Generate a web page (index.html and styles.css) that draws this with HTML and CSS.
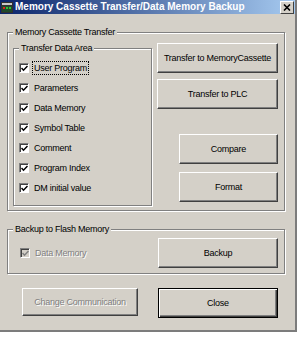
FILE: index.html
```html
<!DOCTYPE html>
<html lang="en">
<head>
  <meta charset="UTF-8">
  <meta name="viewport" content="width=device-width, initial-scale=1.0">
  <title>Memory Cassette Transfer/Data Memory Backup</title>
  <link rel="stylesheet" href="styles.css">
</head>
<body>
  <div class="window">
    <div class="titlebar">
      <svg class="app-icon" width="12" height="11" viewBox="0 0 12 11">
        <rect x="0" y="0" width="12" height="11" fill="#303030"/>
        <rect x="1" y="1" width="10" height="2" fill="#c8c8c8"/>
        <rect x="1" y="4" width="10" height="6" fill="#1f4a2a"/>
        <rect x="2" y="5" width="2" height="2" fill="#e02020"/>
        <rect x="5" y="5" width="2" height="2" fill="#30c030"/>
        <rect x="8" y="5" width="2" height="2" fill="#30c030"/>
      </svg>
      <span class="title">Memory Cassette Transfer/Data Memory Backup</span>
      <span class="close-box">
        <svg width="8" height="7" viewBox="0 0 8 7">
          <path d="M1 0.5 L7 6.5 M7 0.5 L1 6.5" stroke="#000" stroke-width="1.6"/>
        </svg>
      </span>
    </div>

    <div class="content">
      <fieldset class="group group-transfer">
        <legend>Memory Cassette Transfer</legend>
        <div class="transfer-grid">
          <fieldset class="group group-area">
            <legend>Transfer Data Area</legend>
            <label class="check">
              <span class="box"><svg width="7" height="7" viewBox="0 0 7 7"><path d="M0.5 3 L2.5 5.2 L6.5 1" stroke="#000" stroke-width="1.5" fill="none"/></svg></span>
              <span class="text focused">User Program</span>
            </label>
            <label class="check">
              <span class="box"><svg width="7" height="7" viewBox="0 0 7 7"><path d="M0.5 3 L2.5 5.2 L6.5 1" stroke="#000" stroke-width="1.5" fill="none"/></svg></span>
              <span class="text">Parameters</span>
            </label>
            <label class="check">
              <span class="box"><svg width="7" height="7" viewBox="0 0 7 7"><path d="M0.5 3 L2.5 5.2 L6.5 1" stroke="#000" stroke-width="1.5" fill="none"/></svg></span>
              <span class="text">Data Memory</span>
            </label>
            <label class="check">
              <span class="box"><svg width="7" height="7" viewBox="0 0 7 7"><path d="M0.5 3 L2.5 5.2 L6.5 1" stroke="#000" stroke-width="1.5" fill="none"/></svg></span>
              <span class="text">Symbol Table</span>
            </label>
            <label class="check">
              <span class="box"><svg width="7" height="7" viewBox="0 0 7 7"><path d="M0.5 3 L2.5 5.2 L6.5 1" stroke="#000" stroke-width="1.5" fill="none"/></svg></span>
              <span class="text">Comment</span>
            </label>
            <label class="check">
              <span class="box"><svg width="7" height="7" viewBox="0 0 7 7"><path d="M0.5 3 L2.5 5.2 L6.5 1" stroke="#000" stroke-width="1.5" fill="none"/></svg></span>
              <span class="text">Program Index</span>
            </label>
            <label class="check">
              <span class="box"><svg width="7" height="7" viewBox="0 0 7 7"><path d="M0.5 3 L2.5 5.2 L6.5 1" stroke="#000" stroke-width="1.5" fill="none"/></svg></span>
              <span class="text">DM initial value</span>
            </label>
          </fieldset>

          <div class="transfer-buttons">
            <button class="btn">Transfer to MemoryCassette</button>
            <button class="btn btn-plc">Transfer to PLC</button>
            <button class="btn btn-short btn-compare">Compare</button>
            <button class="btn btn-short btn-format">Format</button>
          </div>
        </div>
      </fieldset>

      <fieldset class="group group-backup">
        <legend>Backup to Flash Memory</legend>
        <div class="backup-row">
          <label class="check disabled">
            <span class="box"><svg width="7" height="7" viewBox="0 0 7 7"><path d="M0.5 3 L2.5 5.2 L6.5 1" stroke="#808080" stroke-width="1.5" fill="none"/></svg></span>
            <span class="text">Data Memory</span>
          </label>
          <button class="btn btn-backup">Backup</button>
        </div>
      </fieldset>

      <div class="actions">
        <button class="btn btn-change" disabled>Change Communication</button>
        <button class="btn btn-default">Close</button>
      </div>
    </div>
  </div>
</body>
</html>
```

FILE: styles.css
```css
body {
  margin: 0;
  padding: 0;
  background-color: #fff;
  font-family: "Liberation Sans", Arial, sans-serif;
  font-size: 9px;
  letter-spacing: -0.25px;
  color: #000;
}

.window {
  width: 295px;
  height: 330px;
  background-color: #d4d0c8;
  border-right: 2px solid #7c7c7c;
  border-bottom: 2px solid #7c7c7c;
}

.titlebar {
  display: flex;
  align-items: center;
  height: 14px;
  background: linear-gradient(to right, #0a246a, #a6caf0);
}

.app-icon {
  display: block;
  margin-left: 1px;
  flex-shrink: 0;
}

.title {
  margin-left: 2px;
  flex: 1;
  color: #fff;
  font-size: 10px;
  font-weight: bold;
  letter-spacing: 0;
  line-height: 14px;
  white-space: nowrap;
}

.close-box {
  display: flex;
  align-items: center;
  justify-content: center;
  width: 12px;
  height: 11px;
  margin-right: 1px;
  background-color: #d4d0c8;
  border-top: 1px solid #fff;
  border-left: 1px solid #fff;
  border-right: 1px solid #404040;
  border-bottom: 1px solid #404040;
}

.content {
  padding: 0 10px 0 7px;
}

.group {
  margin: 0;
  min-width: 0;
  border: 1px solid #808080;
  box-shadow: inset 1px 1px 0 #fff, 1px 1px 0 #fff;
}

.group legend {
  padding: 0 2px;
  line-height: 11px;
  background-color: #d4d0c8;
}

.group-transfer {
  margin-top: 13px;
  padding: 5px 6px 4px 5px;
}

.transfer-grid {
  display: grid;
  grid-template-columns: 139px 1fr;
  column-gap: 5px;
}

.group-area {
  padding: 4px 4px 7px 5px;
}

.check {
  display: flex;
  align-items: center;
  height: 20px;
}

.check .box {
  display: flex;
  align-items: center;
  justify-content: center;
  box-sizing: border-box;
  width: 10px;
  height: 10px;
  margin-right: 5px;
  background-color: #fff;
  border-top: 1px solid #808080;
  border-left: 1px solid #808080;
  border-right: 1px solid #fff;
  border-bottom: 1px solid #fff;
  box-shadow: inset 1px 1px 0 #404040;
  flex-shrink: 0;
}

.check .box svg {
  display: block;
  margin: 1px 0 0 1px;
}

.check .text {
  line-height: 12px;
  white-space: nowrap;
}

.check .focused {
  margin-left: -1px;
  padding: 0 1px;
  outline: 1px dotted #000;
}

.check.disabled .box {
  background-color: #d4d0c8;
}

.check.disabled .text {
  color: #808080;
  text-shadow: 1px 1px 0 #fff;
}

.transfer-buttons {
  display: flex;
  flex-direction: column;
}

.btn {
  box-sizing: border-box;
  height: 30px;
  padding: 0;
  font-family: inherit;
  font-size: inherit;
  letter-spacing: inherit;
  color: #000;
  background-color: #d4d0c8;
  border-top: 1px solid #fff;
  border-left: 1px solid #fff;
  border-right: 1px solid #404040;
  border-bottom: 1px solid #404040;
  border-radius: 0;
  box-shadow: inset -1px -1px 0 #808080;
  white-space: nowrap;
}

.btn:disabled {
  color: #808080;
  text-shadow: 1px 1px 0 #fff;
}

.btn-plc {
  margin-top: 6px;
}

.btn-short {
  align-self: flex-end;
  width: 99px;
}

.btn-compare {
  margin-top: 25px;
}

.btn-format {
  margin-top: 8px;
}

.group-backup {
  margin-top: 13px;
  padding: 3px 6px 5px 5px;
}

.backup-row {
  display: flex;
  align-items: center;
  justify-content: space-between;
}

.backup-row .check {
  padding-left: 7px;
}

.btn-backup {
  width: 120px;
}

.actions {
  display: flex;
  align-items: flex-start;
  justify-content: space-between;
  margin-top: 14px;
  padding: 0 7px 0 15px;
}

.btn-change {
  width: 116px;
  height: 28px;
}

.btn-default {
  width: 120px;
  border: 1px solid #000;
  box-shadow: inset 1px 1px 0 #fff, inset -1px -1px 0 #404040, inset -2px -2px 0 #808080;
}
```
